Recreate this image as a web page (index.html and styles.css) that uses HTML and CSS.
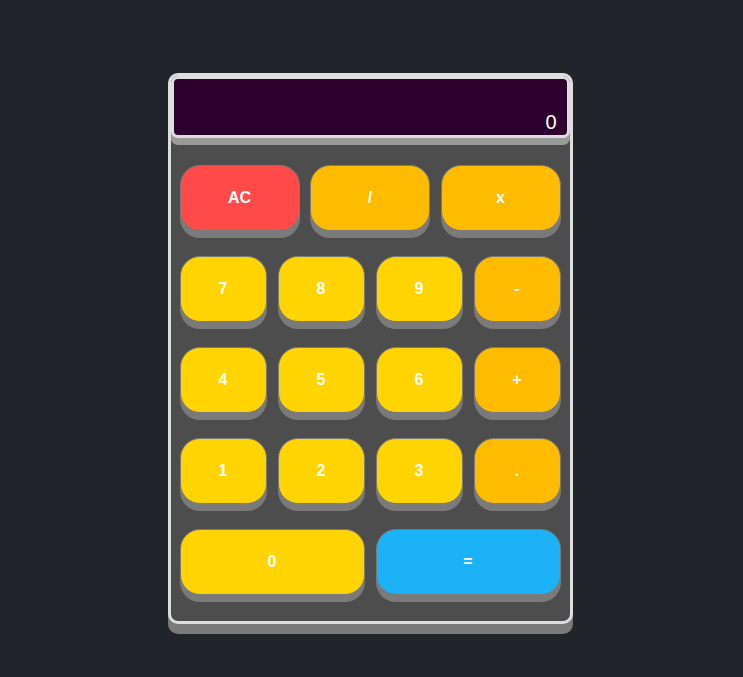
FILE: index.html
```html
<!DOCTYPE html>
<html lang="en">
<head>
<meta charset="utf-8">
<title>Calculator</title>
<link rel="stylesheet" href="styles.css">
</head>
<body>
  <div class="calculator">
    <div class="display">0</div>
    <div class="keys">
      <div class="row row-3">
        <button class="key key-clear">AC</button>
        <button class="key key-op">/</button>
        <button class="key key-op">x</button>
      </div>
      <div class="row">
        <button class="key key-num">7</button>
        <button class="key key-num">8</button>
        <button class="key key-num">9</button>
        <button class="key key-op">-</button>
      </div>
      <div class="row">
        <button class="key key-num">4</button>
        <button class="key key-num">5</button>
        <button class="key key-num">6</button>
        <button class="key key-op">+</button>
      </div>
      <div class="row">
        <button class="key key-num">1</button>
        <button class="key key-num">2</button>
        <button class="key key-num">3</button>
        <button class="key key-op">.</button>
      </div>
      <div class="row">
        <button class="key key-num key-wide">0</button>
        <button class="key key-eq key-wide">=</button>
      </div>
    </div>
  </div>
</body>
</html>
```

FILE: styles.css
```css
* {
  box-sizing: border-box;
}

html, body {
  margin: 0;
  padding: 0;
}

body {
  background: #212529;
  min-height: 677px;
  display: flex;
  justify-content: center;
  align-items: flex-start;
  padding-top: 73px;
  padding-right: 3px;
  font-family: "Liberation Sans", Arial, sans-serif;
}

.calculator {
  width: 405px;
  background: #4d4d4d;
  border: 3px solid #dedede;
  border-radius: 10px;
  box-shadow: 0 10px 0 #7a7a7a;
}

.display {
  height: 62px;
  background: #2d002d;
  border: 3px solid #dedede;
  border-radius: 7px;
  box-shadow: 0 7px 0 #9a9a9a;
  color: #ffffff;
  font-size: 20px;
  display: flex;
  align-items: flex-end;
  justify-content: flex-end;
  padding: 0 10px 1px;
}

.keys {
  display: flex;
  flex-direction: column;
  gap: 25px;
  padding: 27px 9px 26px;
}

.row {
  display: grid;
  grid-template-columns: repeat(4, 1fr);
  column-gap: 11px;
}

.row-3 {
  grid-template-columns: repeat(3, 1fr);
  column-gap: 10.5px;
}

.key {
  height: 66px;
  border: 1px solid #7a7a7a;
  border-radius: 20px;
  box-shadow: 0 7px 0 #7a7a7a;
  color: #ffffff;
  font-family: "Liberation Sans", Arial, sans-serif;
  font-size: 16px;
  font-weight: bold;
  padding: 0;
  cursor: pointer;
}

.key-wide {
  grid-column: span 2;
}

.key-clear {
  background: #ff4a4a;
}

.key-op {
  background: #ffbb00;
}

.key-num {
  background: #ffd400;
}

.key-eq {
  background: #1cb3f6;
}
```
